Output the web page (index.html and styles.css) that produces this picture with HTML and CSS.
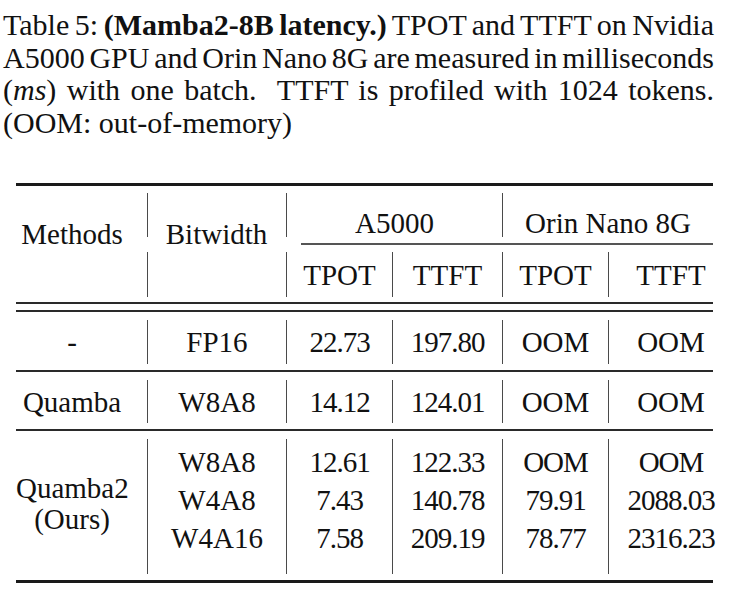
FILE: index.html
```html
<!DOCTYPE html>
<html lang="en">
<head>
<meta charset="utf-8">
<title>Table 5: Mamba2-8B latency</title>
<link rel="stylesheet" href="styles.css">
</head>
<body>
<div class="page">
  <p class="caption">
    <span class="cl tight">Table 5: <b>(Mamba2-8B latency.)</b> TPOT and TTFT on Nvidia</span>
    <span class="cl tight">A5000 GPU and Orin Nano 8G are measured in milliseconds</span>
    <span class="cl">(<i>ms</i>) with one batch.&nbsp; TTFT is profiled with 1024 tokens.</span>
    <span class="cl last">(OOM: out-of-memory)</span>
  </p>

  <div class="table">
    <div class="rule heavy top"></div>

    <div class="grid head">
      <div class="c1 span-all hd-multi">Methods</div>
      <div class="c2 span-all hd-multi">Bitwidth</div>
      <div class="c2 vbar hrow1"></div>
      <div class="c2 vbar hrow2"></div>
      <div class="group a5000 hrow1 bl">A5000</div>
      <div class="group orin hrow1 bl">Orin Nano 8G</div>
      <div class="cmid"></div>
      <div class="c3 hrow2 bl sub">TPOT</div>
      <div class="c4 hrow2 bl sub">TTFT</div>
      <div class="c5 hrow2 bl sub">TPOT</div>
      <div class="c6 hrow2 bl sub">TTFT</div>
    </div>

    <div class="rule double"></div>

    <div class="grid row row-a">
      <div class="c1">-</div>
      <div class="c2 bl">FP16</div>
      <div class="c3 bl num">22.73</div>
      <div class="c4 bl num">197.80</div>
      <div class="c5 bl">OOM</div>
      <div class="c6 bl">OOM</div>
    </div>

    <div class="rule mid"></div>

    <div class="grid row row-b">
      <div class="c1">Quamba</div>
      <div class="c2 bl">W8A8</div>
      <div class="c3 bl num">14.12</div>
      <div class="c4 bl num">124.01</div>
      <div class="c5 bl">OOM</div>
      <div class="c6 bl">OOM</div>
    </div>

    <div class="rule mid"></div>

    <div class="grid row row-group">
      <div class="c1 method-multi">Quamba2<br>(Ours)</div>
      <div class="c2 bl stack"><span>W8A8</span><span>W4A8</span><span>W4A16</span></div>
      <div class="c3 bl stack num"><span>12.61</span><span>7.43</span><span>7.58</span></div>
      <div class="c4 bl stack num"><span>122.33</span><span>140.78</span><span>209.19</span></div>
      <div class="c5 bl stack num"><span>OOM</span><span>79.91</span><span>78.77</span></div>
      <div class="c6 bl stack num"><span>OOM</span><span>2088.03</span><span>2316.23</span></div>
    </div>

    <div class="rule heavy bottom"></div>
  </div>
</div>
</body>
</html>
```

FILE: styles.css
```css
html, body {
  margin: 0;
  padding: 0;
  background: #ffffff;
}

html, body, .page, .caption, .table {
  font-family: "Liberation Serif", serif;
}

body {
  width: 730px;
  height: 597px;
  overflow: hidden;
  color: #111111;
}

.page {
  padding-top: 9px;
}

/* ---------- caption ---------- */
.caption {
  margin: 0 0 0 3px;
  width: 711px;
  font-size: 30px;
  line-height: 32.5px;
}

.cl {
  display: block;
  text-align: justify;
  text-align-last: justify;
}

.cl.tight {
  word-spacing: -3.5px;
}

.cl.last {
  text-align: left;
  text-align-last: left;
}

.caption b {
  font-weight: 700;
}

/* ---------- table ---------- */
.table {
  margin: 44px 0 0 16px;
  width: 697px;
  font-size: 29px;
  line-height: 32px;
}

.rule {
  background: #1a1a1a;
}

.rule.heavy {
  height: 3px;
}

.rule.top {
  margin-bottom: 7px;
}

.rule.bottom {
  margin-top: 6px;
}

.rule.mid {
  height: 2px;
  margin: 6px 0 8px;
  background: #2a2a2a;
}

.rule.double {
  height: 6px;
  margin: 5px 0 8px;
  background: transparent;
  border-top: 2px solid #2a2a2a;
  border-bottom: 2px solid #2a2a2a;
}

.grid {
  display: grid;
  grid-template-columns: 131px 139px 106px 110px 106px 105px;
  text-align: center;
}

.bl {
  border-left: 1px solid #4a4a4a;
}

.c1 { grid-column: 1; padding-right: 19px; }
.c2 { grid-column: 2; }
.c3 { grid-column: 3; }
.c4 { grid-column: 4; }
.c5 { grid-column: 5; }
.c6 { grid-column: 6; padding-left: 20px; }

.num {
  letter-spacing: -1px;
}

/* header */
.head {
  grid-template-rows: 44px 15px 45px;
}

.span-all {
  grid-row: 1 / 4;
}

.hd-multi {
  padding-top: 25px;
}

.hrow1 {
  grid-row: 1;
}

.hrow2 {
  grid-row: 3;
}

.vbar {
  border-left: 1px solid #4a4a4a;
}

.group.hrow1 {
  padding-top: 14px;
}

.a5000 {
  grid-column: 3 / 5;
}

.orin {
  grid-column: 5 / 7;
}

.cmid {
  grid-column: 3 / 7;
  grid-row: 2;
  height: 2px;
  margin: 6px 0 0 15px;
  background: #555555;
}

.sub {
  display: flex;
  align-items: center;
  justify-content: center;
}

.c6.sub {
  padding-left: 20px;
}

/* body rows */
.row > div {
  display: flex;
  align-items: center;
  justify-content: center;
}

.row-a {
  height: 44px;
}

.row-b {
  height: 43px;
}

.row-group {
  height: 135px;
}

.row-group > .method-multi {
  display: block;
  line-height: 31px;
  padding-top: 34px;
}

.row-group > .stack {
  flex-direction: column;
  justify-content: flex-start;
  line-height: 38px;
  padding-top: 4px;
}
```
